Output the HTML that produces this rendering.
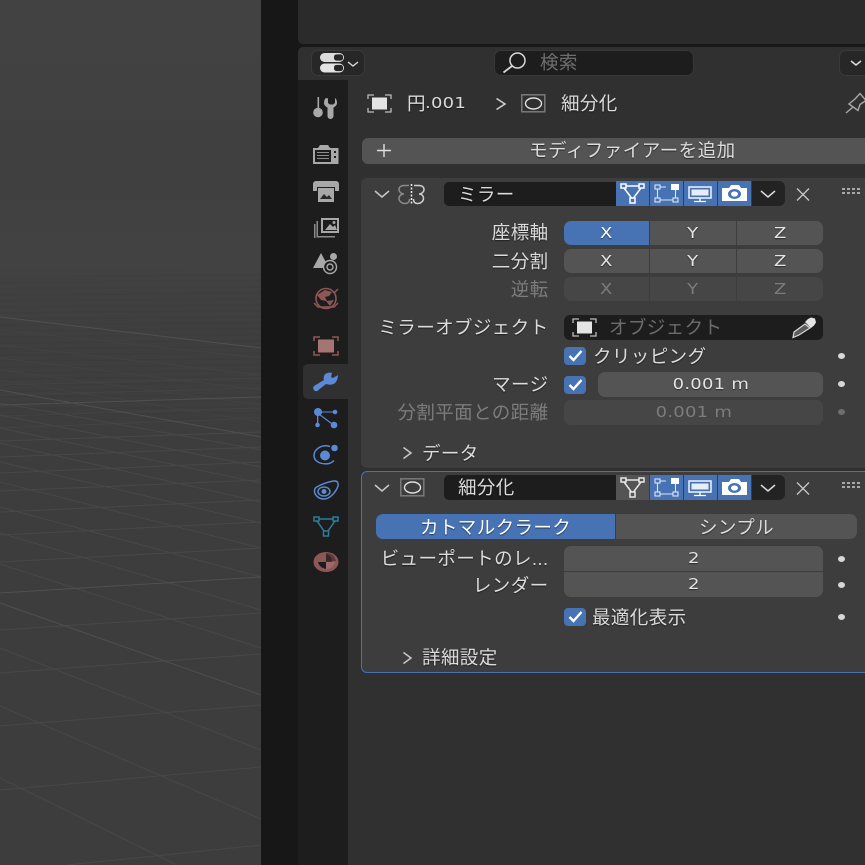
<!DOCTYPE html>
<html lang="ja"><head><meta charset="utf-8"><title>Blender</title>
<style>
html,body{margin:0;padding:0;width:865px;height:865px;overflow:hidden;background:#181818}
body{position:relative;font-family:"DejaVu Sans","Noto Sans CJK JP",sans-serif}
.a{position:absolute;box-sizing:border-box}
.t{position:absolute;white-space:nowrap;font-family:"Liberation Sans","Noto Sans CJK JP",sans-serif;font-size:18.5px;letter-spacing:.4px;line-height:24px;height:24px;color:#dcdcdc;text-shadow:0 1px 1px rgba(0,0,0,.5)}
.r{text-align:right}
.b{position:absolute;box-sizing:border-box;background:#545454;color:#e4e4e4;text-align:center;font-family:"DejaVu Sans",sans-serif;font-size:15px;line-height:24px;text-shadow:0 1px 1px rgba(0,0,0,.5)}
.w{display:inline-block;transform:scaleX(1.2);letter-spacing:.2px}
.on{background:#4772b3;color:#fff}
.dis{background:#464646;color:#7c7c7c;text-shadow:none}
.dot{position:absolute;width:7px;height:6px;border-radius:50%;background:#d8d8d8}
svg{position:absolute;overflow:visible}
.chk{position:absolute;width:22px;height:18px;background:#4772b3;border-radius:4px}
</style></head><body>

<svg style="left:0;top:0" width="261" height="865" viewBox="0 0 261 865">
<defs>
<linearGradient id="bg" x1="0" y1="0" x2="0" y2="1"><stop offset="0" stop-color="#424242"/><stop offset=".2" stop-color="#404040"/><stop offset=".3" stop-color="#424242"/><stop offset=".38" stop-color="#3f3f3f"/><stop offset=".5" stop-color="#3d3d3d"/><stop offset="1" stop-color="#3d3d3d"/></linearGradient>
<pattern id="st" width="261" height="6" patternUnits="userSpaceOnUse" patternTransform="rotate(-.5)"><rect width="261" height="2" fill="#000" opacity=".03"/></pattern>
</defs>
<rect width="261" height="865" fill="url(#bg)"/>
<rect y="270" width="261" height="150" fill="url(#st)"/>
<g stroke="#484848" stroke-width="1" fill="none">
<path d="M0 330L261 358M0 345L261 375M0 358L261 390M0 370L261 405M0 380L261 422" opacity=".5"/>
<path d="M0 403L261 450M0 415L261 467M0 428L261 483M0 443L261 502M0 462L261 523M0 482L261 548M0 507L261 577M0 533L261 610M0 564L261 648M0 648L261 750M0 706L261 819M0 778L177 865"/>
<path d="M0 385L261 378M0 395L261 388M0 416L261 408M0 428L261 418" opacity=".6"/>
<path d="M0 441L261 432M0 457L261 447M0 473L261 462M0 491L261 480M0 512L261 500M0 535L261 522M0 562L261 548M0 630L261 613M0 673L261 654M0 726L261 705M0 790L261 767M67 865L261 845"/>
</g>
<g stroke="#505050" stroke-width="1" fill="none">
<path d="M0 317L261 348M0 390L261 437M0 603L261 695M0 405L261 397M0 593L261 577"/>
</g>
</svg>

<div class="a" style="left:261px;top:0;width:37px;height:865px;background:#171717"></div>
<div class="a" style="left:298px;top:0;width:567px;height:44px;background:#2b2b2b;border-bottom-left-radius:5px"></div>
<div class="a" style="left:298px;top:44px;width:567px;height:3px;background:#181818"></div>
<div class="a" style="left:298px;top:47px;width:567px;height:818px;background:#303030;border-top-left-radius:5px"></div>
<div class="a" style="left:298px;top:80px;width:50px;height:785px;background:#1d1d1d"></div>
<div class="a" style="left:303px;top:364px;width:45px;height:35px;background:#303030;border-radius:5px 0 0 5px"></div>

<!-- top bar -->
<div class="a" style="left:311px;top:50px;width:54px;height:26px;background:#272727;border:1px solid #3a3a3a;border-radius:7px"></div>
<svg style="left:320px;top:53px" width="42" height="20" viewBox="0 0 42 20">
<rect x="0" y="0" width="24" height="9" rx="4.500" fill="#dcdcdc"/><rect x="14" y="1.400" width="9" height="6.200" rx="2.500" fill="#272727"/>
<rect x="0" y="10.500" width="24" height="9" rx="4.500" fill="#e4e4e4"/><rect x="14" y="11.900" width="9" height="6.200" rx="2.500" fill="#272727"/>
<path d="M28 9l5 4 5-4" stroke="#dcdcdc" stroke-width="1.400" fill="none"/>
</svg>
<div class="a" style="left:494px;top:50px;width:200px;height:26px;background:#1d1d1d;border:1px solid #383838;border-radius:7px"></div>
<svg style="left:502px;top:52px" width="26" height="22" viewBox="0 0 26 22"><circle cx="15.500" cy="8.500" r="7.500" fill="none" stroke="#d8d8d8" stroke-width="1.500"/><path d="M10 14L1.500 20.500" stroke="#d8d8d8" stroke-width="1.800"/></svg>
<div class="t" style="left:540px;top:51px;color:#6e6e6e;text-shadow:none">検索</div>
<div class="a" style="left:839px;top:50px;width:40px;height:26px;background:#272727;border:1px solid #3a3a3a;border-radius:7px"></div>
<svg style="left:850px;top:60px" width="12" height="8" viewBox="0 0 12 8"><path d="M1 1l5 4 5-4" stroke="#dcdcdc" stroke-width="1.500" fill="none"/></svg>

<!-- breadcrumb -->
<svg style="left:367px;top:94px" width="25" height="19" viewBox="0 0 25 19" fill="none" stroke="#bdbdbd" stroke-width="1.300">
<path d="M1 5V1h6M18 1h6v4M1 14v4h6M18 18h6v-4"/><rect x="5" y="3.500" width="15" height="12" fill="#e4e4e4" stroke="none"/></svg>
<div class="t" style="left:407px;top:92px;letter-spacing:0">円</div>
<div class="t" style="left:425px;top:91px;font-family:'DejaVu Sans',sans-serif;font-size:15px;letter-spacing:.2px;transform:scaleX(1.2);transform-origin:0 50%">.001</div>
<svg style="left:495px;top:97px" width="12" height="14" viewBox="0 0 12 14"><path d="M1.500 1.500L10 7l-8.500 5.500" stroke="#d2d2d2" stroke-width="1.500" fill="none"/></svg>
<svg style="left:521px;top:94px" width="25" height="19" viewBox="0 0 25 19" fill="none"><rect x=".8" y=".8" width="23" height="17" stroke="#7a7a7a" stroke-width="1.500"/><ellipse cx="12.500" cy="9.500" rx="8" ry="5.500" stroke="#dedede" stroke-width="1.400"/></svg>
<div class="t" style="left:561px;top:92px">細分化</div>
<svg style="left:845px;top:93px" width="22" height="21" viewBox="0 0 22 21" fill="none" stroke="#a8a8a8" stroke-width="1.400"><path d="M1 20l7-6"/><path d="M4 11l9 6.500 2-6 6-4-6-7-5 5.500z"/></svg>

<!-- add -->
<div class="a" style="left:362px;top:138px;width:503px;height:26px;background:#545454;border-radius:6px 0 0 6px"></div>
<svg style="left:376px;top:143px" width="16" height="16" viewBox="0 0 16 16"><path d="M8 1v13M1 7.500h14" stroke="#e0e0e0" stroke-width="1.400"/></svg>
<div class="t" style="left:529px;top:139px;letter-spacing:.5px">モディファイアーを追加</div>

<!-- panel 1 -->
<div class="a" style="left:361px;top:178px;width:504px;height:290px;background:#3d3d3d;border-radius:6px 0 0 6px"></div>
<svg style="left:374px;top:190px" width="16" height="9" viewBox="0 0 16 9"><path d="M1 1l7 6 7-6" stroke="#c8c8c8" stroke-width="1.500" fill="none"/></svg>
<svg style="left:398px;top:184px" width="27" height="21" viewBox="0 0 27 21" fill="none" stroke-width="1.500"><path d="M11 1.500H6C3 1.500 1 3 1 5.500S3.500 10 6 10c-3 0-5 2-5 4.500S3.500 19.500 7 19.500 11.500 17 11.500 15" stroke="#8a8a8a"/><path d="M16 1.500h5c3 0 5 1.500 5 4S23.500 10 21 10c3 0 4.500 2 4.500 4.500S23 19.500 19.500 19.500 15.500 17 15.500 15" stroke="#cfcfcf"/><path d="M13.500 0v21" stroke="#ececec" stroke-dasharray="2 1.500"/></svg>
<div class="a" style="left:444px;top:182px;width:172px;height:24px;background:#1d1d1d;border-radius:5px 0 0 5px"></div>
<div class="t" style="left:458px;top:183px">ミラー</div>
<div class="a on" style="left:616px;top:181px;width:33px;height:25px"></div>
<div class="a on" style="left:650px;top:181px;width:33px;height:25px"></div>
<div class="a on" style="left:684px;top:181px;width:33px;height:25px"></div>
<div class="a on" style="left:718px;top:181px;width:33px;height:25px"></div>
<div class="a" style="left:752px;top:181px;width:33px;height:25px;background:#232323;border-radius:0 6px 6px 0"></div>
<svg style="left:620px;top:183px" width="25" height="21" viewBox="0 0 25 21" fill="none" stroke="#fff" stroke-width="1.500"><rect x="1" y="1" width="5" height="4"/><rect x="19" y="1" width="5" height="4"/><rect x="10" y="15" width="5" height="5"/><path d="M6 3h13M4 5l7.500 10M21 5l-7.500 10"/></svg>
<svg style="left:654px;top:184px" width="25" height="20" viewBox="0 0 25 20" fill="none" stroke="#dfe7f3" stroke-width="1.100"><rect x="1" y="1" width="5" height="4"/><rect x="17" y="0" width="8" height="6" fill="#fff" stroke="none"/><rect x="1" y="14" width="5" height="4"/><rect x="19" y="14" width="5" height="4"/><path d="M6 3h6M3.500 5v9M21.500 6v8M6 16h13"/></svg>
<svg style="left:688px;top:186px" width="25" height="17" viewBox="0 0 25 17"><rect x="1" y="1" width="22" height="11" fill="none" stroke="#fff" stroke-width="1.400"/><rect x="3.500" y="3.500" width="17" height="6" fill="#e8eef8"/><path d="M12 12v3M6 15.500h12" stroke="#fff" stroke-width="1.300"/></svg>
<svg style="left:721px;top:184px" width="27" height="18" viewBox="0 0 27 18"><path d="M1 4h7l2-3h8l2 3h6v13H1z" fill="#fff"/><ellipse cx="13.500" cy="10" rx="6.500" ry="5" fill="#4772b3"/><ellipse cx="13.500" cy="10" rx="3.500" ry="2.600" fill="#fff"/></svg>
<svg style="left:760px;top:190px" width="16" height="9" viewBox="0 0 16 9"><path d="M1 1l7 6 7-6" stroke="#dcdcdc" stroke-width="1.500" fill="none"/></svg>
<svg style="left:796px;top:188px" width="14" height="13" viewBox="0 0 14 13"><path d="M1 .5l12 12M13 .5l-12 12" stroke="#c8c8c8" stroke-width="1.300"/></svg>
<svg style="left:842px;top:188px" width="18" height="7" viewBox="0 0 18 7" fill="#a8a8a8"><path d="M0 0h3v2H0zM5 0h3v2H5zM10 0h3v2h-3zM15 0h3v2h-3zM0 4h3v2H0zM5 4h3v2H5zM10 4h3v2h-3zM15 4h3v2h-3z"/></svg>

<div class="t r" style="right:316.500px;top:221px">座標軸</div>
<div class="t r" style="right:316.500px;top:250px">二分割</div>
<div class="t r" style="right:316.500px;top:278px;color:#7c7c7c;text-shadow:none">逆転</div>
<div class="b on" style="left:564px;top:221px;width:85px;height:24px;border-radius:7px 0 0 7px"><span class="w">X</span></div>
<div class="b" style="left:650px;top:221px;width:86px;height:24px"><span class="w">Y</span></div>
<div class="b" style="left:737px;top:221px;width:86px;height:24px;border-radius:0 7px 7px 0"><span class="w">Z</span></div>
<div class="b" style="left:564px;top:249px;width:85px;height:24px;border-radius:7px 0 0 7px"><span class="w">X</span></div>
<div class="b" style="left:650px;top:249px;width:86px;height:24px"><span class="w">Y</span></div>
<div class="b" style="left:737px;top:249px;width:86px;height:24px;border-radius:0 7px 7px 0"><span class="w">Z</span></div>
<div class="b dis" style="left:564px;top:277px;width:85px;height:24px;border-radius:7px 0 0 7px"><span class="w">X</span></div>
<div class="b dis" style="left:650px;top:277px;width:86px;height:24px"><span class="w">Y</span></div>
<div class="b dis" style="left:737px;top:277px;width:86px;height:24px;border-radius:0 7px 7px 0"><span class="w">Z</span></div>

<div class="t r" style="right:316.500px;top:316px">ミラーオブジェクト</div>
<div class="a" style="left:564px;top:315px;width:259px;height:25px;background:#1d1d1d;border-radius:6px"></div>
<svg style="left:572px;top:318px" width="25" height="19" viewBox="0 0 25 19" fill="none" stroke="#bdbdbd" stroke-width="1.300"><path d="M1 5V1h6M18 1h6v4M1 14v4h6M18 18h6v-4"/><rect x="5" y="3.500" width="15" height="12" fill="#e4e4e4" stroke="none"/></svg>
<div class="t" style="left:609px;top:316px;color:#6c6c6c;text-shadow:none">オブジェクト</div>
<svg style="left:791px;top:317px" width="26" height="21" viewBox="0 0 26 21"><path d="M14 5l3-3 3-1.500 4 1 1 4-2 3-3 2.500z" fill="#e4e4e4"/><path d="M14 7l5 4-11 7-6 2.500L3 15z" fill="#5c5c5c" stroke="#d8d8d8" stroke-width="1.200"/></svg>

<div class="chk" style="left:564px;top:347px"></div>
<svg style="left:568px;top:350px" width="15" height="12" viewBox="0 0 15 12"><path d="M1.500 6l4 4 8-9" stroke="#fff" stroke-width="2.400" fill="none"/></svg>
<div class="t" style="left:593px;top:345px">クリッピング</div>
<div class="dot" style="left:838px;top:353px"></div>

<div class="t r" style="right:316.500px;top:373px">マージ</div>
<div class="chk" style="left:564px;top:376px"></div>
<svg style="left:568px;top:379px" width="15" height="12" viewBox="0 0 15 12"><path d="M1.500 6l4 4 8-9" stroke="#fff" stroke-width="2.400" fill="none"/></svg>
<div class="b" style="left:598px;top:372px;width:225px;height:25px;border-radius:7px;line-height:25px"><span class="w">0.001 m</span></div>
<div class="dot" style="left:838px;top:381px"></div>

<div class="t r" style="right:316.500px;top:401px;color:#7c7c7c;text-shadow:none">分割平面との距離</div>
<div class="b dis" style="left:564px;top:400px;width:259px;height:25px;border-radius:7px;line-height:25px"><span class="w">0.001 m</span></div>
<div class="dot" style="left:838px;top:409px;background:#6e6e6e"></div>

<svg style="left:402px;top:446px" width="11" height="14" viewBox="0 0 11 14"><path d="M1.500 1.500L9 7l-7.500 5.500" stroke="#c8c8c8" stroke-width="1.500" fill="none"/></svg>
<div class="t" style="left:422px;top:442px">データ</div>

<!-- panel 2 -->
<div class="a" style="left:361px;top:471px;width:510px;height:202px;background:#3d3d3d;border:1px solid #4772b3;border-radius:6px"></div>
<svg style="left:374px;top:484px" width="16" height="9" viewBox="0 0 16 9"><path d="M1 1l7 6 7-6" stroke="#c8c8c8" stroke-width="1.500" fill="none"/></svg>
<svg style="left:400px;top:478px" width="25" height="19" viewBox="0 0 25 19" fill="none"><rect x=".8" y=".8" width="23" height="17" stroke="#7a7a7a" stroke-width="1.500"/><ellipse cx="12.500" cy="9.500" rx="8" ry="5.500" stroke="#dedede" stroke-width="1.400"/></svg>
<div class="a" style="left:444px;top:475px;width:172px;height:25px;background:#1d1d1d;border-radius:5px 0 0 5px"></div>
<div class="t" style="left:458px;top:476px">細分化</div>
<div class="a" style="left:616px;top:475px;width:33px;height:25px;background:#545454"></div>
<div class="a on" style="left:650px;top:475px;width:33px;height:25px"></div>
<div class="a on" style="left:684px;top:475px;width:33px;height:25px"></div>
<div class="a on" style="left:718px;top:475px;width:33px;height:25px"></div>
<div class="a" style="left:752px;top:475px;width:33px;height:25px;background:#232323;border-radius:0 6px 6px 0"></div>
<svg style="left:620px;top:477px" width="25" height="21" viewBox="0 0 25 21" fill="none" stroke="#e8e8e8" stroke-width="1.500"><rect x="1" y="1" width="5" height="4"/><rect x="19" y="1" width="5" height="4"/><rect x="10" y="15" width="5" height="5"/><path d="M6 3h13M4 5l7.500 10M21 5l-7.500 10"/></svg>
<svg style="left:654px;top:478px" width="25" height="20" viewBox="0 0 25 20" fill="none" stroke="#dfe7f3" stroke-width="1.100"><rect x="1" y="1" width="5" height="4"/><rect x="17" y="0" width="8" height="6" fill="#fff" stroke="none"/><rect x="1" y="14" width="5" height="4"/><rect x="19" y="14" width="5" height="4"/><path d="M6 3h6M3.500 5v9M21.500 6v8M6 16h13"/></svg>
<svg style="left:688px;top:480px" width="25" height="17" viewBox="0 0 25 17"><rect x="1" y="1" width="22" height="11" fill="none" stroke="#fff" stroke-width="1.400"/><rect x="3.500" y="3.500" width="17" height="6" fill="#e8eef8"/><path d="M12 12v3M6 15.500h12" stroke="#fff" stroke-width="1.300"/></svg>
<svg style="left:721px;top:478px" width="27" height="18" viewBox="0 0 27 18"><path d="M1 4h7l2-3h8l2 3h6v13H1z" fill="#fff"/><ellipse cx="13.500" cy="10" rx="6.500" ry="5" fill="#4772b3"/><ellipse cx="13.500" cy="10" rx="3.500" ry="2.600" fill="#fff"/></svg>
<svg style="left:760px;top:484px" width="16" height="9" viewBox="0 0 16 9"><path d="M1 1l7 6 7-6" stroke="#dcdcdc" stroke-width="1.500" fill="none"/></svg>
<svg style="left:796px;top:482px" width="14" height="13" viewBox="0 0 14 13"><path d="M1 .5l12 12M13 .5l-12 12" stroke="#c8c8c8" stroke-width="1.300"/></svg>
<svg style="left:842px;top:482px" width="18" height="7" viewBox="0 0 18 7" fill="#a8a8a8"><path d="M0 0h3v2H0zM5 0h3v2H5zM10 0h3v2h-3zM15 0h3v2h-3zM0 4h3v2H0zM5 4h3v2H5zM10 4h3v2h-3zM15 4h3v2h-3z"/></svg>

<div class="a on" style="left:376px;top:514px;width:239px;height:25px;border-radius:7px 0 0 7px"></div>
<div class="a" style="left:616px;top:514px;width:241px;height:25px;background:#545454;border-radius:0 7px 7px 0"></div>
<div class="t" style="left:420px;top:516px;color:#fff">カトマルクラーク</div>
<div class="t" style="left:699px;top:516px">シンプル</div>

<div class="t r" style="right:316.500px;top:547px">ビューポートのレ...</div>
<div class="t r" style="right:316.500px;top:574px">レンダー</div>
<div class="b" style="left:564px;top:546px;width:259px;height:25px;border-radius:7px 7px 0 0;line-height:25px"><span class="w">2</span></div>
<div class="b" style="left:564px;top:572px;width:259px;height:25px;border-radius:0 0 7px 7px;line-height:25px"><span class="w">2</span></div>
<div class="dot" style="left:838px;top:556px"></div>
<div class="dot" style="left:838px;top:582px"></div>

<div class="chk" style="left:564px;top:608px"></div>
<svg style="left:568px;top:611px" width="15" height="12" viewBox="0 0 15 12"><path d="M1.500 6l4 4 8-9" stroke="#fff" stroke-width="2.400" fill="none"/></svg>
<div class="t" style="left:592px;top:606px">最適化表示</div>
<div class="dot" style="left:838px;top:614px"></div>

<svg style="left:402px;top:651px" width="11" height="14" viewBox="0 0 11 14"><path d="M1.500 1.500L9 7l-7.500 5.500" stroke="#c8c8c8" stroke-width="1.500" fill="none"/></svg>
<div class="t" style="left:422px;top:646px">詳細設定</div>

<!-- sidebar icons -->
<svg style="left:312px;top:97px" width="27" height="22" viewBox="0 0 27 22" fill="#a8a8a8"><rect x="5.500" y="0" width="1.600" height="11"/><circle cx="6" cy="15.500" r="4.800"/><path d="M14 1c-1.500 1-2 3-2 5 0 2 1.500 3.500 3.500 4.500V19a3 3 0 0 0 6 0v-8.500C23.500 9.500 25 8 25 6c0-2-.5-4-2-5v5l-2 1.500h-3L16 6V1.500z"/></svg>
<svg style="left:313px;top:145px" width="26" height="19" viewBox="0 0 26 19" fill="#a8a8a8"><path d="M7 0h8l2 3h8.500v16H0V3h5zM2 5v12h16V5zM21 6v2h2V6zM21 11v2h2v-2z" fill-rule="evenodd"/><path d="M4 7h12v1H4zM4 10h12v1H4zM4 13h12v1H4z" fill="#8c8c8c"/></svg>
<svg style="left:313px;top:181px" width="26" height="21" viewBox="0 0 26 21" fill="#a8a8a8"><path d="M3 0h20a3 3 0 0 1 3 3v7h-4V6H4v4H0V3a3 3 0 0 1 3-3z"/><rect x="5" y="7" width="16" height="14"/><path d="M7 18l4-5 3 3 2-2 3 4z" fill="#2a2a2a"/></svg>
<svg style="left:313px;top:217px" width="26" height="21" viewBox="0 0 26 21" fill="#a8a8a8"><path d="M8 1h18v15H8zM10 3v11h14V3z" fill-rule="evenodd"/><path d="M12 13l5-6 3 3 2-2 2 5z"/><circle cx="21" cy="5.500" r="1.500"/><path d="M5 4v15h17v1.500H3.500V4zM1 7v14h1.500V7z" fill="#8c8c8c"/></svg>
<svg style="left:313px;top:253px" width="26" height="21" viewBox="0 0 26 21"><path d="M8 0l8 15H0z" fill="#a8a8a8"/><circle cx="20.500" cy="3.500" r="3.500" fill="#a8a8a8"/><circle cx="17" cy="14" r="6.500" fill="#1d1d1d" stroke="#a8a8a8" stroke-width="1.400"/><circle cx="17" cy="14" r="3" fill="none" stroke="#a8a8a8" stroke-width="1.400"/></svg>
<svg style="left:313px;top:288px" width="26" height="22" viewBox="0 0 26 22" fill="none"><circle cx="13" cy="10.500" r="10" fill="#1d1d1d" stroke="#8f5656" stroke-width="1.600"/><path d="M4 7l8-5 7 2-3 4-4 1 2 4 7-1-4 6-4-5-5-1z" fill="#8f5656"/><path d="M1 15l4 4h16l4-4M21 5l4-4" stroke="#8f5656" stroke-width="1.500"/></svg>
<svg style="left:313px;top:336px" width="26" height="20" viewBox="0 0 26 20" fill="none" stroke="#8f5656" stroke-width="1.500"><path d="M1 5V1h6M19 1h6v4M1 15v4h6M19 19h6v-4"/><rect x="5" y="3.500" width="16" height="13" fill="#a77474" stroke="none"/></svg>
<svg style="left:313px;top:372px" width="26" height="20" viewBox="0 0 26 20"><path d="M25 3l-5 3-2-1 1-4c-3-1-7 0-8 3-.5 2-.5 3 0 4L1 14c-2 2 0 6 3 5 1 0 1.500-1 2-1.500L13 12c3 1 6 1 8.500-.5 2-1.500 3.500-5 3.500-8.500z" fill="#5a8ad6"/></svg>
<svg style="left:313px;top:408px" width="26" height="21" viewBox="0 0 26 21" fill="#5a8ad6"><circle cx="5" cy="4" r="4"/><circle cx="22" cy="4" r="2.300"/><circle cx="4.500" cy="17" r="2.300"/><circle cx="21" cy="17" r="3.300"/><path d="M8 3.500h12v1H8zM4 7h1.300v9H4zM7.500 6.500l12 9-.8.900-12-9z"/></svg>
<svg style="left:313px;top:444px" width="26" height="21" viewBox="0 0 26 21" fill="none"><circle cx="12" cy="11.500" r="5" fill="#5a8ad6"/><circle cx="21.500" cy="4" r="3.300" fill="#5a8ad6"/><path d="M17 2.500C9 0 1 5 1 11.500 1 18 9 21 16 19.500c2-.5 4-2 5-3" stroke="#5a8ad6" stroke-width="1.500"/></svg>
<svg style="left:313px;top:480px" width="26" height="20" viewBox="0 0 26 20" fill="none" stroke="#5a8ad6" stroke-width="1.500"><path d="M2 8.500C4 6 16 1 22 1c3 0 3.500 3 3 5-2 6-8 13-14 13C5 19 0 14 2 8.500z"/><ellipse cx="11" cy="11.500" rx="6" ry="4.500"/><circle cx="11" cy="11.500" r="1.800" fill="#5a8ad6"/></svg>
<svg style="left:313px;top:516px" width="26" height="21" viewBox="0 0 26 21" fill="none" stroke="#2f7d9b" stroke-width="1.500"><rect x="1" y="1" width="5" height="4"/><rect x="20" y="1" width="5" height="4"/><rect x="10.500" y="15" width="5" height="5"/><path d="M6 3h14M4 5l7 10M22 5l-7 10"/></svg>
<svg style="left:313px;top:552px" width="26" height="20" viewBox="0 0 26 20"><ellipse cx="13" cy="10" rx="12.500" ry="10" fill="#8f5656"/><path d="M13 1h1c4 0 8 3 9 8H13z" fill="#5f3a3a"/><path d="M13 10h9c-1 4-4 7-9 7z" fill="#a06868"/><path d="M13 10H5c.5 3 3 6 8 7z" fill="#1d1d1d"/><path d="M13 2v8h6c0-4-2-7-6-8z" fill="#1d1d1d" opacity=".65"/></svg>

</body></html>
